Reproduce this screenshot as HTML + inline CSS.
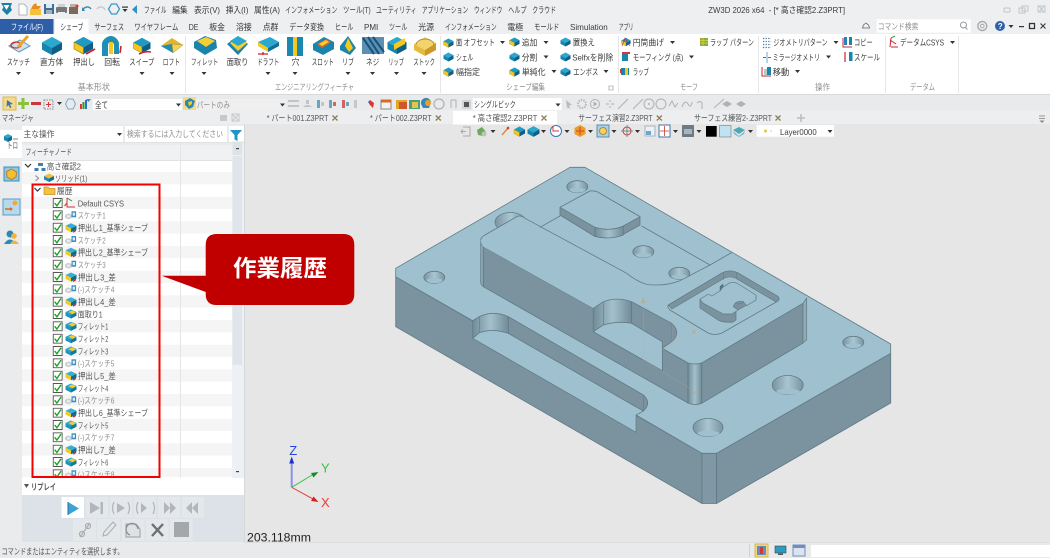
<!DOCTYPE html>
<html><head><meta charset="utf-8"><title>ZW3D</title>
<style>
html,body{margin:0;padding:0;background:#e6e6e6;width:1050px;height:558px;overflow:hidden}
svg{display:block;filter:blur(.35px)}
text{font-family:"Liberation Sans","Noto Sans CJK JP",sans-serif;font-size:8.5px;fill:#3a3a3a;white-space:pre}
.g{fill:#8f8f8f}.w{fill:#fff}.b{fill:#555}
.m{stroke:#5f7a86;stroke-width:.8;fill:none}
</style></head><body>
<svg width="1050" height="558" viewBox="0 0 1050 558" xmlns="http://www.w3.org/2000/svg">
<defs>
<linearGradient id="cyl" x1="0" x2="1" y1="0" y2="0"><stop offset="0" stop-color="#728c97"/><stop offset=".5" stop-color="#a3c1cd"/><stop offset="1" stop-color="#728c97"/></linearGradient>
<linearGradient id="hole" x1="0" x2="1" y1="0" y2="0"><stop offset="0" stop-color="#7a94a0"/><stop offset=".5" stop-color="#a9c6d2"/><stop offset="1" stop-color="#7a94a0"/></linearGradient>
<symbol id="tr" viewBox="0 0 5 3" width="5" height="3"><path d="M0 0H5L2.500 3Z" fill="#333"/></symbol>
<symbol id="bx" viewBox="0 0 24 22" overflow="visible"><path d="M12 1 23 7 12 13 1 7Z" fill="#2aa8d0"/><path d="M1 7 12 13V21L1 15Z" fill="#1585ad"/><path d="M12 13 23 7V15L12 21Z" fill="#0c5f86"/></symbol>
<symbol id="by" viewBox="0 0 24 22" overflow="visible"><path d="M12 1 23 7 12 13 1 7Z" fill="#1f9ac5"/><path d="M1 7 12 13V21L1 15Z" fill="#f4c91f"/><path d="M12 13 23 7V15L12 21Z" fill="#0c5f86"/><path d="M1 7 12 13V21L1 15Z" fill="none" stroke="#8a6d10" stroke-width=".6"/></symbol>
<symbol id="ck" viewBox="0 0 10 10" width="10" height="10"><rect x=".5" y=".5" width="9" height="9" fill="#fff" stroke="#555"/><path d="M2 5 4.200 7.800 8.300 1.800" fill="none" stroke="#17a51d" stroke-width="1.400"/></symbol>
<symbol id="sk" viewBox="0 0 12 10" width="12" height="10"><ellipse cx="4" cy="6" rx="3.600" ry="2.800" fill="#c9cfd2"/><ellipse cx="4" cy="6" rx="1.600" ry="1.200" fill="#eee"/><rect x="7" y="1" width="4.600" height="6" fill="#3b8fc4"/><rect x="8.200" y="2.400" width="2.200" height="3" fill="#e6f2fa"/></symbol>
<symbol id="ex" viewBox="0 0 12 10" width="12" height="10"><path d="M6 .5 11.500 3 6 5.800 .5 3Z" fill="#38aed4"/><path d="M.5 3 6 5.800V9.600L.5 6.800Z" fill="#f4c91f"/><path d="M6 5.800 11.500 3V6.800L6 9.600Z" fill="#0d6b92"/><path d="M8 9.500 11 7.600" stroke="#d2232a" stroke-width="1.300"/></symbol>
<symbol id="fi" viewBox="0 0 12 10" width="12" height="10"><path d="M6 .5 11.500 3 6 5.800 .5 3Z" fill="#2aa8d0"/><path d="M.5 3 6 5.800V9.600L.5 6.800Z" fill="#1f94bd"/><path d="M6 5.800 11.500 3V6.800L6 9.600Z" fill="#14779e"/><path d="M3.500 3 7 1.400 11 3.400 7.600 5.200Z" fill="#f6cc2a"/></symbol>
<clipPath id="cp"><rect x="22" y="160" width="210" height="317"/></clipPath>
</defs>

<!-- chrome -->
<rect width="1050" height="34" fill="#edeff1"/>
<rect y="34" width="1050" height="60" fill="#fff"/>
<rect y="94" width="1050" height="16" fill="#e8eaec"/>
<rect y="110" width="1050" height="14" fill="#eceef0"/>
<rect y="94" width="1050" height="1" fill="#d7dadd"/>
<rect x="245" y="124" width="805" height="419" fill="#e6e6e6"/>
<rect y="543" width="1050" height="15" fill="#e9eaec"/>
<rect y="542" width="1050" height="1" fill="#dcdee0"/>

<!-- quick access -->
<path d="M1 3h11l-1.500 4 1.500 3-5 5-5-5 1.500-3z" fill="#1c7fa8"/><path d="M3.500 5h6L6.500 10z" fill="#fff"/>
<path d="M19 4h5l3 3v8h-8z" fill="#fff" stroke="#9aa4ad" stroke-width=".8"/>
<path d="M31 9h8l2-3h-4l-1-3-3 2z" fill="#ee8a1c"/><rect x="30" y="9" width="11" height="6" fill="#f6c23a"/>
<rect x="44" y="4" width="10" height="10" fill="#3f6f94"/><rect x="46" y="4" width="6" height="4" fill="#dfe8ee"/><rect x="46" y="10" width="6" height="4" fill="#9cb4c6"/>
<rect x="56" y="7" width="11" height="6" rx="1" fill="#75797c"/><rect x="58" y="4" width="7" height="3" fill="#cfd2d4"/><rect x="58" y="12" width="7" height="3" fill="#eee"/>
<rect x="69" y="7" width="9" height="7" fill="#7c6a58"/><rect x="70" y="4" width="6" height="3" fill="#b9b0a6"/><circle cx="77" cy="6" r="1.500" fill="#d33"/>
<path d="M83 10a4.500 4.500 0 0 1 8-1" fill="none" stroke="#3a86b0" stroke-width="1.400"/><path d="M82 7v4h3z" fill="#3a86b0"/>
<path d="M105 10a4.500 4.500 0 0 0-8-1" fill="none" stroke="#c4c8cb" stroke-width="1.400"/>
<path d="M111.500 4h5l3 5-3 5h-5l-3-5z" fill="none" stroke="#3a9cc8" stroke-width="1.300"/>
<rect x="122" y="6.500" width="6" height="1.200" fill="#333"/><use href="#tr" x="122.500" y="9"/>
<path d="M137 5v9l-5-4.500z" fill="#2f8fd0"/>

<!-- menu -->
<g>
<text x="144" y="13" textLength="22.500" lengthAdjust="spacingAndGlyphs">ファイル</text>
<text x="172.300" y="13" textLength="15.300" lengthAdjust="spacingAndGlyphs">編集</text>
<text x="194" y="13" textLength="26" lengthAdjust="spacingAndGlyphs">表示(V)</text>
<text x="225.700" y="13" textLength="22.700" lengthAdjust="spacingAndGlyphs">挿入(I)</text>
<text x="254" y="13" textLength="26" lengthAdjust="spacingAndGlyphs">属性(A)</text>
<text x="285.300" y="13" textLength="52" lengthAdjust="spacingAndGlyphs">インフォメーション</text>
<text x="343" y="13" textLength="27.700" lengthAdjust="spacingAndGlyphs">ツール(T)</text>
<text x="376" y="13" textLength="40.700" lengthAdjust="spacingAndGlyphs">ユーティリティ</text>
<text x="421.700" y="13" textLength="46.600" lengthAdjust="spacingAndGlyphs">アプリケーション</text>
<text x="474" y="13" textLength="28.300" lengthAdjust="spacingAndGlyphs">ウィンドウ</text>
<text x="508.300" y="13" textLength="18.300" lengthAdjust="spacingAndGlyphs">ヘルプ</text>
<text x="532.300" y="13" textLength="23.700" lengthAdjust="spacingAndGlyphs">クラウド</text>
<text x="708.300" y="13" textLength="136.700" lengthAdjust="spacingAndGlyphs">ZW3D 2026 x64  - [* 高さ確認2.Z3PRT]</text>
</g>
<!-- window controls -->
<rect x="1004" y="8" width="6" height="4" rx="1" fill="none" stroke="#c2c6c9"/>
<rect x="1019" y="8" width="6" height="5" fill="none" stroke="#c2c6c9"/><rect x="1022" y="6" width="6" height="5" fill="none" stroke="#c2c6c9"/>
<path d="M1038 6h7v6h-7zM1039 6l5 6M1044 6l-5 6" fill="none" stroke="#c2c6c9"/>
<!-- row 2 right -->
<path d="M862.500 28h7l-1-3-2.500-2-2.500 2z" fill="none" stroke="#666" stroke-width=".8"/>
<rect x="876.700" y="19.300" width="94" height="13.400" fill="#fff"/>
<text x="877.700" y="29.500" class="g" textLength="40.700" lengthAdjust="spacingAndGlyphs">コマンド検索</text>
<circle cx="963.500" cy="25" r="3" fill="none" stroke="#999"/><path d="M965.500 27.500l2 2" stroke="#999"/>
<circle cx="982.300" cy="26" r="4.500" fill="#eee" stroke="#aaa" stroke-width="1.400"/><circle cx="982.300" cy="26" r="1.800" fill="none" stroke="#aaa"/>
<circle cx="1000" cy="26" r="5" fill="#3061a8"/><text x="997.800" y="29" style="font-size:8px;font-weight:700;fill:#fff">?</text>
<use href="#tr" x="1008.500" y="25"/>
<rect x="1019" y="26" width="5" height="1.200" fill="#333"/>
<rect x="1029.500" y="23.500" width="5" height="5" fill="none" stroke="#333" stroke-width="1.300"/>
<path d="M1040.500 23.500l5 5M1045.500 23.500l-5 5" stroke="#333" stroke-width="1"/>

<!-- ribbon tabs -->
<rect x="0" y="19" width="53.500" height="15" fill="#2f5ea8"/>
<rect x="55" y="19" width="33.500" height="15" fill="#fff"/>
<g>
<text x="11" y="30" class="w" textLength="32" lengthAdjust="spacingAndGlyphs">ファイル(F)</text>
<text x="60.300" y="30" textLength="23" lengthAdjust="spacingAndGlyphs">シェーブ</text>
<text x="94.300" y="30" textLength="29.700" lengthAdjust="spacingAndGlyphs">サーフェス</text>
<text x="134.300" y="30" textLength="44" lengthAdjust="spacingAndGlyphs">ワイヤフレーム</text>
<text x="188.700" y="30" textLength="9.700" lengthAdjust="spacingAndGlyphs">DE</text>
<text x="209.300" y="30" textLength="15.700" lengthAdjust="spacingAndGlyphs">板金</text>
<text x="236" y="30" textLength="15.700" lengthAdjust="spacingAndGlyphs">溶接</text>
<text x="262.700" y="30" textLength="15.700" lengthAdjust="spacingAndGlyphs">点群</text>
<text x="289.300" y="30" textLength="34.700" lengthAdjust="spacingAndGlyphs">データ変換</text>
<text x="335" y="30" textLength="18.300" lengthAdjust="spacingAndGlyphs">ヒール</text>
<text x="364" y="30" textLength="14.300" lengthAdjust="spacingAndGlyphs">PMI</text>
<text x="389" y="30" textLength="18.300" lengthAdjust="spacingAndGlyphs">ツール</text>
<text x="418.300" y="30" textLength="15.700" lengthAdjust="spacingAndGlyphs">光源</text>
<text x="445" y="30" textLength="51.700" lengthAdjust="spacingAndGlyphs">インフォメーション</text>
<text x="507.300" y="30" textLength="16" lengthAdjust="spacingAndGlyphs">電極</text>
<text x="534" y="30" textLength="25.300" lengthAdjust="spacingAndGlyphs">モールド</text>
<text x="570" y="30" textLength="37.700" lengthAdjust="spacingAndGlyphs">Simulation</text>
<text x="618.700" y="30" textLength="14.700" lengthAdjust="spacingAndGlyphs">アプリ</text>
</g>

<!-- ribbon big icons -->
<g>
<path d="M9 46 20 40 30 46 19 52Z" fill="#cfe3ef" stroke="#6a9ac0"/><ellipse cx="16" cy="45" rx="5" ry="3" fill="none" stroke="#d3302a" stroke-width="1.300"/><path d="M18 47 28 36" stroke="#e9a727" stroke-width="3"/>
<use href="#bx" x="41" y="36" width="22" height="20"/>
<use href="#by" x="73" y="36" width="21" height="19"/><path d="M86 54 95 49" stroke="#c8242a" stroke-width="1.800"/>
<path d="M102 56V44c0-4 5-8 9-8s8 4 8 8V54h-5V45c0-2-2-3-3-3s-3 1-3 3V56Z" fill="#1f8fb8"/><path d="M109 42h4v12h-4z" fill="#f4c91f"/><path d="M120 53 121 46" stroke="#c8242a" stroke-width="1.600"/>
<use href="#by" x="131" y="37" width="22" height="17"/><path d="M139 54q6-3 12-2" stroke="#c8242a" stroke-width="1.600" fill="none"/>
<path d="M161 46 172 38 183 45 173 53Z" fill="#e0b528"/><path d="M161 46 173 53 172 44Z" fill="#1f8fb8"/><path d="M172 44 183 45 173 53Z" fill="#f4d25a" stroke="#9a7f20" stroke-width=".4"/>
<path d="M194 42 205 36 216 40 217 48 205 55 194 48Z" fill="#1a84ad"/><path d="M197 41 206 37 215 41 206 47Z" fill="#f5ce33"/>
<path d="M227 44 238 36 248 44 238 55Z" fill="#1a84ad"/><path d="M230 43 240 37 247 43 238 51Z" fill="#f5ce33"/><path d="M238 36 247 41 238 46 230 41Z" fill="#2aa8d0"/>
<path d="M258 42 270 37 279 42 268 48Z" fill="#2aa8d0"/><path d="M258 42 268 48V52L258 46Z" fill="#f4c91f"/><path d="M268 48 279 42V46L268 52Z" fill="#0e6e95"/><path d="M263 52 263 55M258 54h10" stroke="#c8242a" stroke-width="1.300"/>
<rect x="287" y="37" width="16" height="19" fill="#1a88b0"/><rect x="293" y="37" width="4" height="19" fill="#f2c91f"/>
<path d="M313 44 324 37 334 42V49L323 55 313 50Z" fill="#1a84ad"/><path d="M317 44 326 39 331 42 322 48Z" fill="#d96a20"/><path d="M319 44 326 40 329 42 322 46Z" fill="#f5ce33"/>
<path d="M340 46 348 36 356 48 350 55 340 50Z" fill="#1a84ad"/><path d="M345 46 348 38 353 48 349 52Z" fill="#f4c91f"/>
<rect x="362" y="37" width="22" height="17" fill="#5d8fb0"/><path d="M363 38 374 54M368 37 379 54M373 37 384 52" stroke="#16527c" stroke-width="2"/>
<use href="#bx" x="386" y="36" width="22" height="19"/><path d="M394 50V44L405 38V44Z" fill="#f4c91f"/>
<path d="M414 44 425 37 436 43 425 50Z" fill="#f3d46b"/><path d="M414 44 425 50V56L414 50Z" fill="#e5bb3d"/><path d="M425 50 436 43V50L425 56Z" fill="#c99a25"/><path d="M416 45a9 6 0 0 1 18 0" fill="none" stroke="#9a7620" stroke-width=".7"/>
</g>
<g>
<text x="7" y="65" textLength="23" lengthAdjust="spacingAndGlyphs">スケッチ</text>
<text x="40" y="65" textLength="23.300" lengthAdjust="spacingAndGlyphs">直方体</text>
<text x="73.300" y="65" textLength="21.700" lengthAdjust="spacingAndGlyphs">押出し</text>
<text x="104.300" y="65" textLength="15.700" lengthAdjust="spacingAndGlyphs">回転</text>
<text x="129.300" y="65" textLength="25" lengthAdjust="spacingAndGlyphs">スイープ</text>
<text x="162.700" y="65" textLength="17.300" lengthAdjust="spacingAndGlyphs">ロフト</text>
<text x="191" y="65" textLength="27.300" lengthAdjust="spacingAndGlyphs">フィレット</text>
<text x="226.700" y="65" textLength="21.700" lengthAdjust="spacingAndGlyphs">面取り</text>
<text x="257.300" y="65" textLength="22" lengthAdjust="spacingAndGlyphs">ドラフト</text>
<text x="291.700" y="65" textLength="7.700" lengthAdjust="spacingAndGlyphs">穴</text>
<text x="311.700" y="65" textLength="22.300" lengthAdjust="spacingAndGlyphs">スロット</text>
<text x="342" y="65" textLength="12" lengthAdjust="spacingAndGlyphs">リブ</text>
<text x="366" y="65" textLength="13.300" lengthAdjust="spacingAndGlyphs">ネジ</text>
<text x="388.300" y="65" textLength="15.700" lengthAdjust="spacingAndGlyphs">リップ</text>
<text x="413.300" y="65" textLength="21.700" lengthAdjust="spacingAndGlyphs">ストック</text>
</g>
<use href="#tr" x="16" y="72"/><use href="#tr" x="49.500" y="72"/><use href="#tr" x="139.500" y="72"/><use href="#tr" x="169.500" y="72"/><use href="#tr" x="201.500" y="72"/><use href="#tr" x="265.500" y="72"/><use href="#tr" x="292.500" y="72"/><use href="#tr" x="345.500" y="72"/><use href="#tr" x="370" y="72"/><use href="#tr" x="394" y="72"/><use href="#tr" x="421.500" y="72"/>

<!-- small ribbon icons -->
<g>
<use href="#by" x="443" y="38" width="11" height="10"/><use href="#bx" x="443" y="52" width="11" height="10"/><use href="#by" x="443" y="67" width="11" height="10"/>
<use href="#by" x="509" y="37" width="11" height="10"/><use href="#bx" x="509" y="52" width="11" height="10"/><use href="#by" x="509" y="67" width="11" height="10"/>
<use href="#bx" x="560" y="37" width="11" height="10"/><use href="#bx" x="560" y="52" width="11" height="10"/><use href="#bx" x="560" y="67" width="11" height="10"/>
<use href="#by" x="621" y="37" width="10" height="10"/><path d="M622 46l3-8 5 8" stroke="#c8242a" fill="none" stroke-width=".6"/>
<rect x="622" y="52" width="6" height="9" fill="#1a84ad"/><rect x="622" y="52" width="8" height="2" fill="#d33"/>
<rect x="621" y="68" width="8" height="7" fill="#1a84ad"/><rect x="625" y="68" width="3" height="7" fill="#f4c91f"/><rect x="620" y="69" width="2" height="4" fill="#d33"/>
<rect x="700" y="38" width="8" height="8" fill="#7fb341"/><path d="M700 40.500h8M700 43h8M703 38v8" stroke="#f0cc3f" stroke-width=".8"/>
<path d="M763 38.500h8M763 41.500h8M763 44.500h8M763 47.500h8" stroke="#4a7b9e" stroke-width="1.200" stroke-dasharray="1.300 1.300"/>
<path d="M767 52v11" stroke="#6fa8c9"/><path d="M763 57.500h3" stroke="#d33"/><path d="M768 57.500h3" stroke="#2a80b8"/>
<rect x="764" y="69" width="3" height="6" fill="#b9c7cf"/><rect x="767" y="67" width="4" height="8" fill="#1a84ad"/><path d="M762 67v9h9" stroke="#c8242a" fill="none"/>
<rect x="844" y="37" width="3" height="8" fill="#2a80b8"/><rect x="849" y="37" width="3" height="8" fill="#1a84ad"/><path d="M843 38v9h9" stroke="#c8242a" fill="none"/>
<path d="M845 52v10" stroke="#c8242a" stroke-width="1.200"/><rect x="849" y="52" width="3.500" height="9" fill="#1a84ad"/>
<path d="M891 38 890 47M891 47 898 47M890 40l6 4" stroke="#c8242a"/><path d="M891 38l4-2" stroke="#2fa84a"/>
</g>
<g>
<text x="456" y="45.700" textLength="39" lengthAdjust="spacingAndGlyphs">面 オフセット</text>
<text x="456" y="60.300" textLength="17.300" lengthAdjust="spacingAndGlyphs">シェル</text>
<text x="456" y="75" textLength="24" lengthAdjust="spacingAndGlyphs">幅指定</text>
<text x="521.700" y="45.700" textLength="15.600" lengthAdjust="spacingAndGlyphs">追加</text>
<text x="521.700" y="60.300" textLength="15.600" lengthAdjust="spacingAndGlyphs">分割</text>
<text x="521.700" y="75" textLength="24" lengthAdjust="spacingAndGlyphs">単純化</text>
<text x="572.700" y="45.700" textLength="22.300" lengthAdjust="spacingAndGlyphs">置換え</text>
<text x="572.300" y="60.300" textLength="41" lengthAdjust="spacingAndGlyphs">Selfxを削除</text>
<text x="573.300" y="75" textLength="25" lengthAdjust="spacingAndGlyphs">エンボス</text>
<text x="632.700" y="45.700" textLength="31.300" lengthAdjust="spacingAndGlyphs">円筒曲げ</text>
<text x="632.700" y="60.300" textLength="50.600" lengthAdjust="spacingAndGlyphs">モーフィング (点)</text>
<text x="632.700" y="75" textLength="16.300" lengthAdjust="spacingAndGlyphs">ラップ</text>
<text x="710" y="45.700" textLength="44" lengthAdjust="spacingAndGlyphs">ラップ パターン</text>
<text x="773.300" y="45.700" textLength="54.400" lengthAdjust="spacingAndGlyphs">ジオメトリパターン</text>
<text x="772.700" y="60.300" textLength="47.300" lengthAdjust="spacingAndGlyphs">ミラージオメトリ</text>
<text x="772.700" y="75" textLength="16.600" lengthAdjust="spacingAndGlyphs">移動</text>
<text x="854" y="45.700" textLength="18.700" lengthAdjust="spacingAndGlyphs">コピー</text>
<text x="854" y="60.300" textLength="26" lengthAdjust="spacingAndGlyphs">スケール</text>
<text x="900" y="45.700" textLength="44" lengthAdjust="spacingAndGlyphs">データムCSYS</text>
</g>
<use href="#tr" x="500" y="41"/><use href="#tr" x="543.500" y="41"/><use href="#tr" x="543.500" y="55.500"/><use href="#tr" x="551.500" y="70"/><use href="#tr" x="603.500" y="70"/><use href="#tr" x="670" y="41"/><use href="#tr" x="689" y="55.500"/><use href="#tr" x="833.500" y="41"/><use href="#tr" x="826" y="55.500"/><use href="#tr" x="795" y="70"/><use href="#tr" x="950" y="41"/>
<g>
<text x="77.700" y="90" class="g" textLength="32.300" lengthAdjust="spacingAndGlyphs">基本形状</text>
<text x="275" y="90" class="g" textLength="79" lengthAdjust="spacingAndGlyphs">エンジニアリングフィーチャ</text>
<text x="506" y="90" class="g" textLength="39" lengthAdjust="spacingAndGlyphs">シェーブ編集</text>
<text x="680" y="90" class="g" textLength="18" lengthAdjust="spacingAndGlyphs">モーフ</text>
<text x="815" y="90" class="g" textLength="15" lengthAdjust="spacingAndGlyphs">操作</text>
<text x="910" y="90" class="g" textLength="25" lengthAdjust="spacingAndGlyphs">データム</text>
</g>
<path d="M185.500 36V93M440.500 36V93M618.500 36V93M758.500 36V93M885.500 36V93M958.500 36V93" stroke="#e4e6e8"/>
<path d="M609 86h4v4h-4z" fill="none" stroke="#888" stroke-width=".6"/>

<!-- selection toolbar -->
<g>
<rect x="3" y="97" width="13" height="13" fill="#f4da8a" stroke="#dcb84e"/>
<path d="M7 100l6 4-3 .5 1.500 3-1.500.5-1.500-3-2 2z" fill="#3a76b8"/>
<path d="M23 98v11M18 103.500h11" stroke="#8cbf3c" stroke-width="3"/>
<rect x="31" y="102" width="10" height="3" fill="#c8373a"/>
<rect x="44" y="100" width="9" height="9" fill="none" stroke="#7b8a96" stroke-dasharray="1.500 1"/><path d="M48.500 102v5M46 104.500h5" stroke="#d33" stroke-width="1"/>
<use href="#tr" x="57" y="102"/>
<path d="M68 99l5 0 2.500 5-2.500 5h-5l-2.500-5z" fill="none" stroke="#7fa9c6"/>
<rect x="80" y="104" width="2" height="5" fill="#d33"/><rect x="82.500" y="102" width="2" height="7" fill="#2a9a3a"/><rect x="85" y="100" width="2" height="9" fill="#2a70c8"/><path d="M86 99h5l-2.500 3z" fill="#2f8fd0"/>
<rect x="92.700" y="99" width="89" height="11" fill="#fff"/>
<use href="#tr" x="176" y="103.500"/>
<rect x="183" y="97" width="13" height="13" fill="#f4da8a"/>
<path d="M185 101l5-3 5 3-2 6-4 2-4-4z" fill="#2a8ab2"/><path d="M188 102l4-1v3l-3 2z" fill="#f2c91f"/>
<rect x="196" y="99" width="90" height="11" fill="#efefef"/>
<use href="#tr" x="280" y="103.500"/>
<rect x="288" y="100" width="11" height="2" fill="#c4c4c4"/><rect x="288" y="105" width="11" height="2" fill="#c4c4c4"/>
<path d="M303 107a6 6 0 0 1 9 0z" fill="#c2c5c8"/><rect x="306" y="100" width="3" height="4" fill="#c2c5c8"/>
<rect x="317" y="100" width="3" height="8" fill="#6aa5c4"/><rect x="321" y="102" width="3" height="4" fill="#c4c4c4"/>
<rect x="329" y="100" width="3" height="8" fill="#6aa5c4"/><rect x="333" y="102" width="3" height="4" fill="#c66"/>
<rect x="342" y="100" width="3" height="8" fill="#c66"/><rect x="346" y="102" width="3" height="4" fill="#6aa5c4"/>
<rect x="354" y="100" width="3" height="8" fill="#c4c8cb"/>
<path d="M370 100l4 3-1 5-3-3z" fill="#d33"/><path d="M370 100l-2 2 2 3z" fill="#2a70c8"/>
<rect x="381" y="100" width="10" height="9" fill="#f3f3f3" stroke="#888"/><rect x="381" y="100" width="10" height="2.500" fill="#d96a20"/>
<rect x="396" y="100" width="11" height="9" fill="#e3a52a"/><rect x="399" y="102" width="8" height="7" fill="#d2562a"/>
<rect x="409" y="100" width="11" height="9" fill="#4aa07a"/><rect x="412" y="102" width="6" height="6" fill="#e8c347"/>
<path d="M421 104a5 5 0 0 1 10-2l-2 6h-6z" fill="#3a86b8"/><circle cx="428" cy="103" r="3" fill="#e8a028"/>
<circle cx="439" cy="104" r="5" fill="none" stroke="#aeb2b5" stroke-width="1.200"/>
<path d="M451 100v8M451 100h5v8" fill="none" stroke="#aeb2b5"/>
<rect x="462" y="100" width="9" height="9" fill="#d2d4d6"/><rect x="464" y="102" width="5" height="5" fill="#555"/>
<rect x="472.700" y="98" width="89" height="12" fill="#fff"/>
<use href="#tr" x="555.500" y="103.500"/>
<path d="M566 100l6 5-3 .5 1 3-3-1z" fill="#b8bbbe"/>
<circle cx="582" cy="104" r="4" fill="none" stroke="#b8bbbe" stroke-width="2" stroke-dasharray="1.500 1"/>
<circle cx="595" cy="104" r="4.500" fill="none" stroke="#aeb2b5"/><path d="M593.500 101.500v5l4-2.500z" fill="#aeb2b5"/>
<path d="M606 104h3M611 104h3M610 100v2M610 106v2" stroke="#aeb2b5"/>
<path d="M618 109 628 99M633 109 643 99" stroke="#aeb2b5"/>
<circle cx="649" cy="104" r="5" fill="none" stroke="#aeb2b5"/><circle cx="649" cy="104" r="1" fill="#aeb2b5"/>
<circle cx="661" cy="104" r="5" fill="none" stroke="#aeb2b5"/>
<path d="M669 106l3-5 3 6 3-4M682 107q3-8 6-3t4-2" fill="none" stroke="#aeb2b5"/>
<path d="M697 103q3-3 5 0v6M714 108l10-9" fill="none" stroke="#aeb2b5"/>
<path d="M722 104l5-3 5 3-5 3z" fill="#aeb2b5"/><path d="M736 104l5-3 5 3-5 3z" fill="#aeb2b5"/>
</g>
<g>
<text x="95" y="108" textLength="13" lengthAdjust="spacingAndGlyphs">全て</text>
<text x="196.700" y="108" class="g" textLength="33.300" lengthAdjust="spacingAndGlyphs">パートのみ</text>
<text x="474" y="107.500" textLength="41.700" lengthAdjust="spacingAndGlyphs">シングルピック</text>
</g>

<!-- doc tabs row -->
<rect x="453" y="111" width="104" height="13.500" fill="#fff"/>
<g>
<text x="1.700" y="121" class="b" textLength="32" lengthAdjust="spacingAndGlyphs">マネージャ</text>
<text x="266.700" y="121" class="b" textLength="61.700" lengthAdjust="spacingAndGlyphs">* パート001.Z3PRT</text>
<text x="370" y="121" class="b" textLength="61.700" lengthAdjust="spacingAndGlyphs">* パート002.Z3PRT</text>
<text x="472.700" y="121" class="b" textLength="64.600" lengthAdjust="spacingAndGlyphs">* 高さ確認2.Z3PRT</text>
<text x="578.300" y="121" class="b" textLength="74.400" lengthAdjust="spacingAndGlyphs">サーフェス演習2.Z3PRT</text>
<text x="694" y="121" class="b" textLength="78" lengthAdjust="spacingAndGlyphs">サーフェス練習2-.Z3PRT</text>
</g>
<path d="M332.500 115.500l5 5M337.500 115.500l-5 5M435.800 115.500l5 5M440.800 115.500l-5 5M541.500 115.500l5 5M546.500 115.500l-5 5M656.800 115.500l5 5M661.800 115.500l-5 5M775.500 115.500l5 5M780.500 115.500l-5 5" stroke="#8a7a50" stroke-width="1.300"/>
<path d="M797 118h8M801 114v8" stroke="#b9bcbf" stroke-width="1.500"/>
<path d="M1039 116h6M1039 118.500h6" stroke="#999"/><path d="M1039.500 120.500h5l-2.500 2.500z" fill="#888"/>
<rect x="220" y="115" width="7" height="6" fill="#c6c9cc"/><path d="M232 114h7v7h-7zM232 114l7 7M239 114l-7 7" fill="none" stroke="#c6c9cc"/>

<!-- canvas toolbar -->
<g>
<path d="M463 127h7v9h-7M466 131.500h-5M463 129.500l-2 2 2 2" fill="none" stroke="#aaa"/>
<path d="M477 130l5-3 4 5-3 4-5-1z" fill="#6da85c"/><circle cx="484" cy="134" r="2.500" fill="#bcc7ae"/>
<use href="#tr" x="490.500" y="130"/>
<path d="M502 135l6-7" stroke="#d98a3a" stroke-width="1.400"/><circle cx="508" cy="128" r="1.300" fill="#d33"/>
<use href="#by" x="513" y="126" width="13" height="11"/>
<use href="#bx" x="527" y="125" width="13" height="13"/>
<use href="#tr" x="541" y="130"/>
<circle cx="556" cy="131" r="5.500" fill="#fff" stroke="#3a76b8"/><path d="M553 126v5h6" stroke="#d33" fill="none"/>
<use href="#tr" x="564.500" y="130"/>
<path d="M580 125l5.500 3v6l-5.500 3-5.500-3v-6z" fill="#f09a2a"/><path d="M580 127v8M576 131h8" stroke="#c8472a"/>
<use href="#tr" x="588" y="130"/>
<rect x="597" y="125" width="12" height="12" fill="#a9d1e8" stroke="#5e8fb0"/><circle cx="603" cy="131" r="3.500" fill="#f2d36b" stroke="#b08b2a"/>
<use href="#tr" x="611.500" y="130"/>
<circle cx="627" cy="131" r="4" fill="none" stroke="#c8372a"/><path d="M627 125v12M621 131h12" stroke="#7a8a96"/>
<use href="#tr" x="635" y="130"/>
<rect x="645" y="126" width="10" height="10" fill="#eaf2f7" stroke="#a8b4bc"/><rect x="646" y="131" width="5" height="4" fill="#6aa7cd"/>
<rect x="659" y="125" width="11" height="12" fill="#fff" stroke="#3f78aa"/><path d="M664.500 126v10M660 131h9" stroke="#c8372a" stroke-width=".8"/>
<use href="#tr" x="673" y="130"/>
<rect x="682" y="125" width="12" height="12" fill="#6d7b88"/><rect x="684" y="129" width="8" height="5" fill="#aab4bc"/>
<use href="#tr" x="696.500" y="130"/>
<rect x="706" y="126" width="10.700" height="10.700" fill="#000"/>
<rect x="719.500" y="125.500" width="11.500" height="11.500" fill="#bfe3f3" stroke="#888" stroke-width=".7"/>
<path d="M733 130l6-3 6 3-6 4z" fill="#4ea9b5"/><path d="M733 131l6 5 6-5-1 3-5 3-5-3z" fill="#86b6c6"/>
<use href="#tr" x="748" y="130"/>
<rect x="756.700" y="125" width="77.300" height="11.700" fill="#fff"/>
<circle cx="765.500" cy="131" r="1.500" fill="#e8c347"/><circle cx="771" cy="131" r="1" fill="#ddd"/>
<text x="780" y="135" textLength="36.700" lengthAdjust="spacingAndGlyphs">Layer0000</text>
<use href="#tr" x="827.500" y="130"/>
</g>

<!-- left panel -->
<rect x="0" y="124" width="245" height="419" fill="#e9ebed"/>
<rect x="0" y="130" width="22" height="28" fill="#fff"/>
<path d="M4 136l4-2 4 2-4 2z" fill="#2aa8d0"/><path d="M4 136l4 2v4l-4-2z" fill="#1a84ad"/><path d="M8 138l4-2v4l-4 2z" fill="#0e6e95"/><path d="M13 139h5" stroke="#888"/>
<text x="7" y="148.500" class="b" textLength="11" lengthAdjust="spacingAndGlyphs">トロ</text>
<rect x="4" y="167" width="15" height="14" fill="#8ec7e0" stroke="#3a90bc"/><path d="M11.500 169l5 3-.5 5-4.500 2.500-4.500-2.500-.5-5z" fill="#f2c037" stroke="#c8781a"/>
<rect x="3" y="199" width="17" height="16" fill="#b5daee" stroke="#5a9cc6"/><circle cx="15" cy="203" r="2.500" fill="#f0a83a"/><path d="M5 209h6" stroke="#d96a2a" stroke-width="1.500"/><path d="M10 207l3 2-3 2z" fill="#d96a2a"/>
<circle cx="10" cy="234" r="3.500" fill="#2a8ab2"/><path d="M4 244q6-9 12 0z" fill="#2a8ab2"/><circle cx="14" cy="236" r="2.800" fill="#f0b53a"/><path d="M10 244q4-7 9 0z" fill="#f0b53a"/>
<rect x="22" y="126" width="101" height="16" fill="#fff"/>
<rect x="125" y="126" width="102" height="16" fill="#fff"/>
<rect x="229" y="126" width="15" height="16" fill="#fff"/>
<path d="M230 130h12l-4.500 5v6l-3-1.500V135z" fill="#1f95c8"/>
<use href="#tr" x="117" y="133"/>
<rect x="22" y="145" width="210" height="333" fill="#fff"/>
<rect x="22" y="145" width="210" height="15" fill="#f0f1f3"/>
<rect x="232" y="141" width="12" height="337" fill="#edf1f5"/>
<rect x="232.500" y="156" width="9.500" height="209" fill="#dfe5eb"/>
<rect x="232.500" y="143" width="9.500" height="12" fill="#dde2e7"/>
<rect x="236" y="148" width="3" height="1.200" fill="#444"/>
<rect x="236" y="471" width="3" height="1.200" fill="#444"/>
<rect x="244" y="124" width="1" height="419" fill="#d5d8db"/>
<rect x="22" y="142" width="222" height="1" fill="#e0e2e4"/>
<g fill="#f5f5f5">
<rect x="22" y="172" width="210" height="12.300"/><rect x="22" y="196.700" width="210" height="12.300"/><rect x="22" y="221.300" width="210" height="12.300"/><rect x="22" y="246" width="210" height="12.300"/><rect x="22" y="270.700" width="210" height="12.300"/><rect x="22" y="295.300" width="210" height="12.300"/><rect x="22" y="320" width="210" height="12.300"/><rect x="22" y="344.700" width="210" height="12.300"/><rect x="22" y="369.300" width="210" height="12.300"/><rect x="22" y="394" width="210" height="12.300"/><rect x="22" y="418.700" width="210" height="12.300"/><rect x="22" y="443.300" width="210" height="12.300"/><rect x="22" y="468" width="210" height="9"/>
</g>
<path d="M180.500 145V478" stroke="#e3e5e7"/>
<path d="M22 160.500H232" stroke="#dfe1e3"/>
<g>
<text x="23.500" y="137" textLength="31" lengthAdjust="spacingAndGlyphs" class="b">主な操作</text>
<text x="127" y="137" class="g" textLength="96" lengthAdjust="spacingAndGlyphs">検索するには入力してください</text>
<text x="25.500" y="155" class="b" textLength="46.500" lengthAdjust="spacingAndGlyphs">フィーチャノード</text>
<text x="46.700" y="169.500" class="b" textLength="34.300" lengthAdjust="spacingAndGlyphs">高さ確認2</text>
<text x="55" y="181.500" class="b" textLength="32.300" lengthAdjust="spacingAndGlyphs">ソリッド(1)</text>
<text x="56.700" y="194" class="b" textLength="16" lengthAdjust="spacingAndGlyphs">履歴</text>
</g>
<path d="M25 164l3 3 3-3M34.500 188l3 3 3-3" fill="none" stroke="#333" stroke-width="1.200"/>
<path d="M35.500 175.500l3 2.700-3 2.700" fill="none" stroke="#999" stroke-width="1.200"/>
<path d="M38 163h5v3h-5zM34.500 168h4v3h-4zM41.500 168h4v3h-4z" fill="#3f7fb0"/>
<path d="M44 176l5-2.500 5 2.500-5 2.500z" fill="#f2c037"/><path d="M44 176l5 2.500v3.500l-5-2.500z" fill="#2a8ab2"/><path d="M49 178.500l5-2.500v3.500l-5 2.500z" fill="#0e6e95"/>
<path d="M44 187h4l1.500 1.500H55v6H44z" fill="#f3c243" stroke="#c88a1c" stroke-width=".7"/>

<!-- tree rows -->
<g clip-path="url(#cp)">
<use href="#ck" x="52.700" y="198"/><use href="#ck" x="52.700" y="210.300"/><use href="#ck" x="52.700" y="222.700"/><use href="#ck" x="52.700" y="235"/><use href="#ck" x="52.700" y="247.300"/><use href="#ck" x="52.700" y="259.700"/><use href="#ck" x="52.700" y="272"/><use href="#ck" x="52.700" y="284.300"/><use href="#ck" x="52.700" y="296.700"/><use href="#ck" x="52.700" y="309"/><use href="#ck" x="52.700" y="321.300"/><use href="#ck" x="52.700" y="333.700"/><use href="#ck" x="52.700" y="346"/><use href="#ck" x="52.700" y="358.300"/><use href="#ck" x="52.700" y="370.700"/><use href="#ck" x="52.700" y="383"/><use href="#ck" x="52.700" y="395.300"/><use href="#ck" x="52.700" y="407.700"/><use href="#ck" x="52.700" y="420"/><use href="#ck" x="52.700" y="432.300"/><use href="#ck" x="52.700" y="444.700"/><use href="#ck" x="52.700" y="457"/><use href="#ck" x="52.700" y="469.300"/>
<path d="M67 198v9h8M67 203l-2.500 3" stroke="#c8372a" fill="none"/><path d="M67 198l5 3" stroke="#3a8a3a"/>
<use href="#sk" x="64.500" y="210.300"/><use href="#ex" x="65" y="222.700"/><use href="#sk" x="64.500" y="235"/><use href="#ex" x="65" y="247.300"/><use href="#sk" x="64.500" y="259.700"/><use href="#ex" x="65" y="272"/><use href="#sk" x="64.500" y="284.300"/><use href="#ex" x="65" y="296.700"/><use href="#fi" x="65" y="309"/><use href="#fi" x="65" y="321.300"/><use href="#fi" x="65" y="333.700"/><use href="#fi" x="65" y="346"/><use href="#sk" x="64.500" y="358.300"/><use href="#ex" x="65" y="370.700"/><use href="#fi" x="65" y="383"/><use href="#sk" x="64.500" y="395.300"/><use href="#ex" x="65" y="407.700"/><use href="#fi" x="65" y="420"/><use href="#sk" x="64.500" y="432.300"/><use href="#ex" x="65" y="444.700"/><use href="#fi" x="65" y="457"/><use href="#sk" x="64.500" y="469.300"/>
<text x="77.700" y="206.300" class="b" textLength="46.300" lengthAdjust="spacingAndGlyphs">Default CSYS</text>
<text x="77.700" y="218.700" class="g" textLength="28" lengthAdjust="spacingAndGlyphs">スケッチ1</text>
<text x="78" y="231" class="b" textLength="70" lengthAdjust="spacingAndGlyphs">押出し1_基準シェーブ</text>
<text x="77.700" y="243.300" class="g" textLength="28" lengthAdjust="spacingAndGlyphs">スケッチ2</text>
<text x="78" y="255.700" class="b" textLength="70" lengthAdjust="spacingAndGlyphs">押出し2_基準シェーブ</text>
<text x="77.700" y="268" class="g" textLength="28" lengthAdjust="spacingAndGlyphs">スケッチ3</text>
<text x="78" y="280.300" class="b" textLength="37.700" lengthAdjust="spacingAndGlyphs">押出し3_差</text>
<text x="77.700" y="292.700" class="g" textLength="36.700" lengthAdjust="spacingAndGlyphs">(-)スケッチ4</text>
<text x="78" y="305" class="b" textLength="37.700" lengthAdjust="spacingAndGlyphs">押出し4_差</text>
<text x="77.700" y="317.300" class="b" textLength="25" lengthAdjust="spacingAndGlyphs">面取り1</text>
<text x="77.700" y="329.700" class="b" textLength="30.600" lengthAdjust="spacingAndGlyphs">フィレット1</text>
<text x="77.700" y="342" class="b" textLength="30.600" lengthAdjust="spacingAndGlyphs">フィレット2</text>
<text x="77.700" y="354.300" class="b" textLength="30.600" lengthAdjust="spacingAndGlyphs">フィレット3</text>
<text x="77.700" y="366.700" class="g" textLength="36.700" lengthAdjust="spacingAndGlyphs">(-)スケッチ5</text>
<text x="78" y="379" class="b" textLength="37.700" lengthAdjust="spacingAndGlyphs">押出し5_差</text>
<text x="77.700" y="391.300" class="b" textLength="30.600" lengthAdjust="spacingAndGlyphs">フィレット4</text>
<text x="77.700" y="403.700" class="g" textLength="36.700" lengthAdjust="spacingAndGlyphs">(-)スケッチ6</text>
<text x="78" y="416" class="b" textLength="70" lengthAdjust="spacingAndGlyphs">押出し6_基準シェーブ</text>
<text x="77.700" y="428.300" class="b" textLength="30.600" lengthAdjust="spacingAndGlyphs">フィレット5</text>
<text x="77.700" y="440.700" class="g" textLength="36.700" lengthAdjust="spacingAndGlyphs">(-)スケッチ7</text>
<text x="78" y="453" class="b" textLength="37.700" lengthAdjust="spacingAndGlyphs">押出し7_差</text>
<text x="77.700" y="465.300" class="b" textLength="30.600" lengthAdjust="spacingAndGlyphs">フィレット6</text>
<text x="77.700" y="477.700" class="g" textLength="36.700" lengthAdjust="spacingAndGlyphs">(-)スケッチ8</text>
</g>

<!-- replay -->
<rect x="22" y="478" width="222" height="17" fill="#fff"/>
<path d="M24 484h5l-2.500 4z" fill="#555"/>
<text x="31" y="490" class="b" textLength="25" lengthAdjust="spacingAndGlyphs" style="font-weight:700">リプレイ</text>
<rect x="22" y="495" width="222" height="47" fill="#dde2e8"/>
<g fill="#e5e8eb">
<rect x="85.500" y="497" width="22.500" height="21"/><rect x="110" y="497" width="22.500" height="21"/><rect x="134" y="497" width="22" height="21"/><rect x="158" y="497" width="22" height="21"/><rect x="182" y="497" width="22" height="21"/>
<rect x="73" y="519" width="23" height="22"/><rect x="97" y="519" width="23" height="22"/><rect x="122" y="519" width="22.500" height="22"/><rect x="146" y="519" width="22.500" height="22"/><rect x="170" y="519" width="22.500" height="22"/>
</g>
<rect x="61.500" y="497" width="22.500" height="21" fill="#fff"/>
<path d="M68 502V515L79 508.500Z" fill="#3aa2d4"/><path d="M68 502V515" stroke="#2a6f9c"/>
<g fill="#b3b7bb">
<path d="M90 502V514L100 508Z"/><rect x="100.500" y="502" width="2.500" height="12"/>
<path d="M117 503V513L125 508Z"/>
<path d="M141 503V513L147 508ZM147 503V513"/><path d="M164 502V514L170 508ZM170 502V514L176 508Z"/><path d="M198 502V514L192 508ZM192 502V514L186 508Z"/>
</g>
<path d="M114 502q-3 6 0 12M128 502q3 6 0 12M138 502q-3 6 0 12M153 502q3 6 0 12" fill="none" stroke="#b3b7bb" stroke-width="1.300"/>
<path d="M80 537 90 523" stroke="#a9adb1" stroke-width="1.200"/><circle cx="82" cy="534" r="2.500" fill="none" stroke="#a9adb1" stroke-width="1.200"/><circle cx="88" cy="526" r="2.500" fill="none" stroke="#a9adb1" stroke-width="1.200"/>
<path d="M103 536l1-4 9-10 3 3-9 10z" fill="#e4e6e8" stroke="#a9adb1"/>
<path d="M126 524h10l4 5v8h-14z" fill="#dfe2e4" stroke="#9a9ea2"/><path d="M130 535a6 6 0 1 1 8-6" fill="none" stroke="#8a8e92" stroke-width="1.300"/>
<path d="M152 524 163 536M163 524 152 536" stroke="#6d7073" stroke-width="2.400"/>
<rect x="174" y="522" width="15" height="15" fill="#a5a8ab"/>

<!-- model -->
<g stroke-linejoin="round">
<path d="M395.700 276.700 702 453.300V503.500L395.700 326.700Z" fill="#7a939e" stroke="#5f7a86" stroke-width=".8"/>
<path d="M716.500 453.300 890.700 353.300V403L716.500 503.500Z" fill="#7a939e" stroke="#5f7a86" stroke-width=".8"/>
<path d="M702 453.300H716.500V503.500H702Z" fill="#7f98a3" stroke="#5f7a86" stroke-width=".8"/>
<path d="M395.700 268.300 570 167.300H585L890.700 344V353.300L716.500 453.300H702L636 415 643.300 411Q652 403 643.300 395L508.300 316.700Q493.300 310 479.300 316.700L472.700 320.700 395.700 276.700Z" fill="#9fc1cf" stroke="#5f7a86" stroke-width=".8"/>
<!-- channel -->
<path d="M472.700 338.300 479.300 332.700Q493.300 328 508.300 333.300L643.300 411 636 415V432.300Z" fill="#9fc1cf" stroke="#5f7a86" stroke-width=".7"/>
<path d="M508.300 316.700 643.300 395Q652 403 643.300 411L508.300 333.300Z" fill="#7a939e" stroke="#5f7a86" stroke-width=".7"/>
<path d="M472.700 320.700 479.300 316.700Q493.300 310 508.300 316.700V333.300Q493.300 328 479.300 332.700L472.700 338.300Z" fill="url(#cyl)" stroke="#5f7a86" stroke-width=".7"/>
<path d="M479.300 316.700V332.700M643.300 395V411" stroke="#5f7a86" stroke-width=".6" fill="none"/>

<!-- holes -->
<g stroke="#5f7a86" stroke-width=".8">
<ellipse cx="434.300" cy="277.300" rx="10.500" ry="6" fill="url(#hole)"/>
<ellipse cx="577.300" cy="186.700" rx="10.500" ry="6" fill="url(#hole)"/>
<ellipse cx="643.300" cy="251.700" rx="10.500" ry="6" fill="url(#hole)"/>
<ellipse cx="679.300" cy="273.300" rx="10.500" ry="6" fill="url(#hole)"/>
<ellipse cx="853.300" cy="342.300" rx="10.500" ry="6" fill="url(#hole)"/>
<ellipse cx="787.700" cy="385" rx="15.500" ry="9.500" fill="url(#hole)"/>
<ellipse cx="708" cy="427.500" rx="15" ry="9" fill="url(#hole)"/>
<ellipse cx="510.500" cy="222" rx="15.500" ry="9.500" fill="url(#hole)"/>
</g>
<g fill="#9fc1cf">
<path d="M426 280Q434 276 443 280 441 283.300 434.300 283.300 428 283.300 426 280Z"/>
<path d="M569 189.500Q577 186 586 189.500 584 192.700 577.300 192.700 571 192.700 569 189.500Z"/>
<path d="M635 254.500Q643 251 652 254.500 650 257.700 643.300 257.700 637 257.700 635 254.500Z"/>
<path d="M671 276Q679 272.500 688 276 686 279.300 679.300 279.300 673 279.300 671 276Z"/>
<path d="M845 345Q853 341.500 862 345 860 348.300 853.300 348.300 847 348.300 845 345Z"/>
<path d="M776 391Q788 386 800 391 797 394.500 787.700 394.500 779 394.500 776 391Z"/>
<path d="M697 433Q708 428 720 433 717 436.500 708 436.500 700 436.500 697 433Z"/>
</g>
<!-- raised block walls -->
<path d="M483.300 246.700 593.300 308.300V331.700L662.300 370.700V348.300L688 363V403L483.300 286.700Z" fill="#7a939e" stroke="#5f7a86" stroke-width=".8"/>
<path d="M480.700 240Q480 243 483.300 246.700V286.700Q481 285 480.700 283Z" fill="#8aa5b1" stroke="#5f7a86" stroke-width=".7"/>
<!-- block top over holes -->
<path d="M480.700 240Q481 237 485 235L517 216.500Q521 215 525 218.300L626.700 273.300Q636 281 646.700 284.500 665 286.500 680 280.700L710 265 731.700 252.500 806.700 296.500V299Q806 301 803 303.300L701.700 363H688L662.300 348.300 671.700 341.700Q682 333 671.700 323.300L631.700 301.700Q616.700 296.500 603.300 301.700L593.300 308.300 483.300 246.700Q480.700 243 480.700 240Z" fill="#9fc1cf"/>
<path d="M593.300 331.700 603.300 325Q616.700 320.500 631.700 323.300L662.300 341.700V370.700Z" fill="#9fc1cf" stroke="#5f7a86" stroke-width=".7"/>
<path d="M593.300 308.300 603.300 301.700Q616.700 296.500 631.700 301.700V323.300Q616.700 320.500 603.300 325L593.300 331.700Z" fill="url(#cyl)" stroke="#5f7a86" stroke-width=".7"/>
<path d="M603.300 301.700V325" stroke="#5f7a86" stroke-width=".6"/>
<path d="M631.700 323.300 662.300 341.700V348.300L671.700 341.700Q682 333 671.700 323.300L631.700 301.700Z" fill="#7a939e" stroke="#5f7a86" stroke-width=".7"/>
<path d="M671.700 323.300V341.700" stroke="#5f7a86" stroke-width=".6"/>
<!-- right wall & corner -->
<path d="M701.700 363 803 303.300V343L701.700 403.300Z" fill="#7a939e" stroke="#5f7a86" stroke-width=".8"/>
<path d="M803 303.300 806.700 298V340L803 343Z" fill="#8fabb6" stroke="#5f7a86" stroke-width=".7"/>
<path d="M688 363Q695 365 701.700 363V403.300Q695 406 688 403Z" fill="url(#cyl)" stroke="#5f7a86" stroke-width=".8"/>
<!-- block top lines -->
<g class="m">
<path d="M480.700 240Q481 237 485 235L517 216.500Q521 215 525 218.300L626.700 273.300Q636 281 646.700 284.500 665 286.500 680 280.700L710 265 731.700 252.500"/>
<path d="M540 227.300 560 216M641.700 226 710 265"/>
<path d="M688 363 662.300 348.300"/>
</g>
<!-- small island -->
<path d="M560 207.300 590 191Q593.500 190.500 597 191.700L640 216.700V225L623 234.500Q610 240 595 236.500L560 215Z" fill="#7a939e" stroke="#5f7a86" stroke-width=".8"/>
<path d="M560 207.300 590 191Q593.500 190.500 597 191.700L640 216.700 623.300 226Q610 232 595 227.300Z" fill="#9fc1cf" stroke="#5f7a86" stroke-width=".8"/>
<path d="M595 227.300Q610 232 623.300 226V235Q610 240 595 236.500Z" fill="url(#cyl)" stroke="#5f7a86" stroke-width=".7"/>
<!-- pocket -->
<path d="M668.300 305 722 273Q730 269 738 273L778 296.500Q780 299 778 301L722 333Q715 336 708 333L670 310Q667 307 668.300 305Z" fill="#9fc1cf" stroke="#5f7a86" stroke-width=".8"/>
<path d="M668.300 305 722 273Q730 269 738 273L778 296.500Q780 299 778 301L776 302 737 279Q730 275 723 279L672 309Z" fill="#7a939e" stroke="#5f7a86" stroke-width=".6"/>
<path d="M723.500 279.500V272.500M736.500 279V272" stroke="#5f7a86" stroke-width=".5"/>
<path d="M700 299.300V308L718 320Q724 323 733 322L736 320V311L756 300V296L700 299Z" fill="#7a939e" stroke="#5f7a86" stroke-width=".7"/>
<path d="M700 299.300 708.300 294 711.700 296 720 291 722.700 287.300 730 282.700Q734 281.500 738.300 284L756 295V300L746.700 305.700 743.300 301.700 735 303.300 733.300 306.700 738.300 310 731.700 314H723.300L703.300 303.300Z" fill="#9fc1cf" stroke="#5f7a86" stroke-width=".7"/>
<path d="M720 291V286.500L723 284V287.300" fill="#5d7682" stroke="#4f6a76" stroke-width=".5"/>
<path d="M735 303.300Q738 300 744 301.700 742 304 738 304Z" fill="#7a939e" stroke="#5f7a86" stroke-width=".5"/>
<!-- datum overlay -->
<g stroke="#b7ae93" stroke-width=".5" fill="none" opacity=".55">
<path d="M643.300 301V360L696 331M643.300 360 696 392M672 313V345"/>
</g>
<path d="M643.300 297l-2 6h4z" fill="#b3ad94"/><path d="M696.500 330l-5 1 2.500 3.500z" fill="#b3ad94"/><path d="M697 392l-5-1 1 3.500z" fill="#b3ad94"/>
</g>

<!-- triad -->
<path d="M291.700 487.300V462" stroke="#8a92e8" stroke-width="2"/><path d="M291.700 456.500l-2.500 7h5z" fill="#1f2fd0"/>
<path d="M291.700 487.300 313 474.500" stroke="#3cc04a" stroke-width="1"/><path d="M318.500 472l-7.500 1 2.500 4.500z" fill="#0f8f2a"/>
<path d="M291.700 487.300 313 499" stroke="#e64848" stroke-width="1"/><path d="M318.500 502l-7.500-1 2.500-4.500z" fill="#d8201f"/>
<text x="289.300" y="455" style="font-size:13px;fill:#2345dc">Z</text>
<text x="321" y="472.300" style="font-size:13px;fill:#38c046">Y</text>
<text x="321" y="507" style="font-size:13px;fill:#e83b3b">X</text>
<text x="247" y="541.500" style="font-size:12px;fill:#222" textLength="64" lengthAdjust="spacingAndGlyphs">203.118mm</text>

<!-- red frame + callout -->
<rect x="32.500" y="184.500" width="127" height="292.500" fill="none" stroke="#f40000" stroke-width="2"/>
<path d="M216.700 234H343.300Q354.300 234 354.300 245V294Q354.300 305 343.300 305H216.700Q205.700 305 205.700 294V292L161.700 275.700H205.700V245Q205.700 234 216.700 234Z" fill="#c00000"/>
<text x="233" y="276" textLength="94" lengthAdjust="spacingAndGlyphs" style="font-size:23px;font-weight:700;fill:#fff">作業履歴</text>

<!-- status -->
<text x="1.500" y="554.500" class="b" textLength="122" lengthAdjust="spacingAndGlyphs">コマンドまたはエンティティを選択します。</text>
<path d="M749.500 544V557" stroke="#cfd2d5"/>
<rect x="755" y="544" width="13" height="13" fill="#f1d486" stroke="#dcb84e"/><rect x="757" y="546" width="9" height="9" fill="#5f8fc0"/><rect x="760" y="547" width="3" height="7" fill="#d33"/>
<rect x="775" y="546" width="11" height="7" fill="#2a9cc0" stroke="#444" stroke-width=".6"/><rect x="778" y="553.500" width="5" height="1.500" fill="#555"/>
<rect x="793" y="545" width="12" height="11" fill="#dbe4ee" stroke="#6f8fc0"/><rect x="793" y="545" width="12" height="3" fill="#6f8fc0"/>
<rect x="811" y="545" width="239" height="12" fill="#fff"/>
</svg>
</body></html>
